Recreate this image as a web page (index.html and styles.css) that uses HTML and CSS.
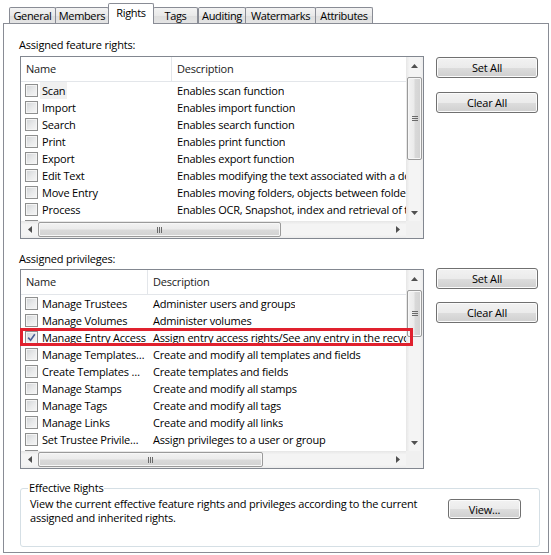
FILE: index.html
```html
<!DOCTYPE html>
<html>
<head>
<meta charset="utf-8">
<link rel="stylesheet" href="styles.css">
</head>
<body>
<div class="window">
  <div class="tabs">
    <div class="tab tab-general">General</div>
    <div class="tab tab-members">Members</div>
    <div class="tab tab-rights active">Rights</div>
    <div class="tab tab-tags">Tags</div>
    <div class="tab tab-auditing">Auditing</div>
    <div class="tab tab-watermarks">Watermarks</div>
    <div class="tab tab-attributes">Attributes</div>
  </div>
  <div class="panel">
    <div class="label label-1">Assigned feature rights:</div>
    <div class="section section-1">
      <div class="listbox list-1">
        <div class="list-content">
          <div class="list-header"><div class="col-name">Name</div><div class="col-desc">Description</div></div>
          <div class="row"><div class="col-name"><span class="check"></span><span class="name focus">Scan</span></div><div class="col-desc">Enables scan function</div></div>
          <div class="row"><div class="col-name"><span class="check"></span><span class="name">Import</span></div><div class="col-desc">Enables import function</div></div>
          <div class="row"><div class="col-name"><span class="check"></span><span class="name">Search</span></div><div class="col-desc">Enables search function</div></div>
          <div class="row"><div class="col-name"><span class="check"></span><span class="name">Print</span></div><div class="col-desc">Enables print function</div></div>
          <div class="row"><div class="col-name"><span class="check"></span><span class="name">Export</span></div><div class="col-desc">Enables export function</div></div>
          <div class="row"><div class="col-name"><span class="check"></span><span class="name">Edit Text</span></div><div class="col-desc">Enables modifying the text associated with a document</div></div>
          <div class="row"><div class="col-name"><span class="check"></span><span class="name">Move Entry</span></div><div class="col-desc">Enables moving folders, objects between folders</div></div>
          <div class="row"><div class="col-name"><span class="check"></span><span class="name">Process</span></div><div class="col-desc">Enables OCR, Snapshot, index and retrieval of text</div></div>
          <div class="row"><div class="col-name"><span class="check"></span><span class="name"></span></div><div class="col-desc"></div></div>
        </div>
        <div class="vscroll">
          <div class="sbtn"><svg width="7" height="4" viewBox="0 0 7 4"><polygon points="0,4 3.5,0 7,4" fill="#505050"/></svg></div>
          <div class="vtrack"><div class="vthumb"><span class="vgrip"></span></div></div>
          <div class="sbtn"><svg width="7" height="4" viewBox="0 0 7 4"><polygon points="0,0 3.5,4 7,0" fill="#505050"/></svg></div>
        </div>
        <div class="hscroll">
          <div class="sbtn"><svg width="4" height="7" viewBox="0 0 4 7"><polygon points="4,0 0,3.5 4,7" fill="#505050"/></svg></div>
          <div class="htrack"><div class="hthumb"><span class="hgrip"></span></div></div>
          <div class="sbtn"><svg width="4" height="7" viewBox="0 0 4 7"><polygon points="0,0 4,3.5 0,7" fill="#505050"/></svg></div>
        </div>
        <div class="corner"></div>
      </div>
      <div class="buttons">
        <button class="btn">Set All</button>
        <button class="btn">Clear All</button>
      </div>
    </div>

    <div class="label label-2">Assigned privileges:</div>
    <div class="section section-2">
      <div class="listbox list-2">
        <div class="list-content">
          <div class="list-header"><div class="col-name">Name</div><div class="col-desc">Description</div></div>
          <div class="row"><div class="col-name"><span class="check"></span><span class="name">Manage Trustees</span></div><div class="col-desc">Administer users and groups</div></div>
          <div class="row"><div class="col-name"><span class="check"></span><span class="name">Manage Volumes</span></div><div class="col-desc">Administer volumes</div></div>
          <div class="row"><div class="col-name"><span class="check checked"><svg width="9" height="9" viewBox="0 0 9 9"><path d="M1.2 4.6 L3.6 7.2 L7.8 1.2" fill="none" stroke="#4a5f97" stroke-width="1.6"/></svg></span><span class="name">Manage Entry Access</span></div><div class="col-desc">Assign entry access rights/See any entry in the recycle bin</div></div>
          <div class="row"><div class="col-name"><span class="check"></span><span class="name">Manage Templates…</span></div><div class="col-desc">Create and modify all templates and fields</div></div>
          <div class="row"><div class="col-name"><span class="check"></span><span class="name">Create Templates …</span></div><div class="col-desc">Create templates and fields</div></div>
          <div class="row"><div class="col-name"><span class="check"></span><span class="name">Manage Stamps</span></div><div class="col-desc">Create and modify all stamps</div></div>
          <div class="row"><div class="col-name"><span class="check"></span><span class="name">Manage Tags</span></div><div class="col-desc">Create and modify all tags</div></div>
          <div class="row"><div class="col-name"><span class="check"></span><span class="name">Manage Links</span></div><div class="col-desc">Create and modify all links</div></div>
          <div class="row"><div class="col-name"><span class="check"></span><span class="name">Set Trustee Privile…</span></div><div class="col-desc">Assign privileges to a user or group</div></div>
          <div class="row"><div class="col-name"><span class="check"></span><span class="name"></span></div><div class="col-desc"></div></div>
        </div>
        <div class="vscroll">
          <div class="sbtn"><svg width="7" height="4" viewBox="0 0 7 4"><polygon points="0,4 3.5,0 7,4" fill="#505050"/></svg></div>
          <div class="vtrack"><div class="vthumb"><span class="vgrip"></span></div></div>
          <div class="sbtn"><svg width="7" height="4" viewBox="0 0 7 4"><polygon points="0,0 3.5,4 7,0" fill="#505050"/></svg></div>
        </div>
        <div class="hscroll">
          <div class="sbtn"><svg width="4" height="7" viewBox="0 0 4 7"><polygon points="4,0 0,3.5 4,7" fill="#505050"/></svg></div>
          <div class="htrack"><div class="hthumb"><span class="hgrip"></span></div></div>
          <div class="sbtn"><svg width="4" height="7" viewBox="0 0 4 7"><polygon points="0,0 4,3.5 0,7" fill="#505050"/></svg></div>
        </div>
        <div class="corner"></div>
      </div>
      <div class="buttons">
        <button class="btn">Set All</button>
        <button class="btn">Clear All</button>
      </div>
      <div class="highlight"></div>
    </div>

    <fieldset class="group">
      <legend>Effective Rights</legend>
      <div class="group-body">
        <p class="group-text">View the current effective feature rights and privileges according to the current<br>assigned and inherited rights.</p>
        <button class="btn btn-view">View...</button>
      </div>
    </fieldset>
  </div>
</div>
</body>
</html>
```

FILE: styles.css
```css
* { box-sizing: border-box; }

html, body {
  margin: 0;
  padding: 0;
  background: #ffffff;
}

body {
  font-family: "Open Sans", "Noto Sans", sans-serif;
  font-size: 11px;
  letter-spacing: -0.2px;
  color: #000;
}

.window {
  width: 551px;
  height: 555px;
  padding-left: 3px;
}

/* Tabs */
.tabs {
  display: flex;
  align-items: flex-end;
  height: 23px;
  padding-left: 6px;
}

.tab {
  height: 16px;
  line-height: 15px;
  padding: 0;
  text-align: center;
  letter-spacing: -0.35px;
  border: 1px solid #898c95;
  border-bottom: none;
  border-radius: 2px 2px 0 0;
  margin-left: -1px;
  background: linear-gradient(#f3f3f3, #e9e9e9 50%, #dedede 51%, #e4e4e4);
  white-space: nowrap;
  overflow: hidden;
  flex: none;
}

.tab-general { margin-left: 0; width: 47px; }
.tab-members { width: 54px; }
.tab-rights { width: 46px; }
.tab-tags { width: 45px; }
.tab-auditing { margin-left: 0; width: 48px; }
.tab-watermarks { width: 71px; }
.tab-attributes { width: 58px; }

.tab.active {
  position: relative;
  z-index: 2;
  height: 21px;
  line-height: 18px;
  margin-bottom: -1px;
  background: #fff;
}

/* Panel */
.panel {
  width: 546px;
  height: 530px;
  border: 1px solid #898c95;
  background: #fff;
  padding-left: 16px;
}

.label {
  line-height: 14px;
  margin-left: -1px;
}

.label-1 { margin-top: 14px; }
.label-2 { margin-top: 13px; }

.section {
  display: flex;
  gap: 12px;
  position: relative;
}

.section-1 { margin-top: 4px; }
.section-2 { margin-top: 3px; }

/* List box */
.listbox {
  width: 404px;
  border: 1px solid #828790;
  display: grid;
  grid-template-columns: 385px 17px;
  background: #fff;
}

.list-1 {
  height: 183px;
  grid-template-rows: 164px 17px;
}

.list-2 {
  height: 200px;
  grid-template-rows: 181px 17px;
}

.list-content {
  overflow: hidden;
  white-space: nowrap;
}

.list-header {
  display: flex;
  height: 25px;
  line-height: 24px;
  border-bottom: 1px solid #e3e6ea;
  color: #1a1a1a;
}

.list-header .col-name {
  padding-left: 5px;
  border-right: 1px solid #e3e6ea;
}

.list-1 .col-name { width: 150px; flex: none; }
.list-2 .col-name { width: 126px; flex: none; }

.list-1 .list-header .col-name { width: 151px; }
.list-2 .list-header .col-name { width: 127px; }

.col-desc {
  padding-left: 5px;
  overflow: hidden;
}

.row {
  display: flex;
  height: 17px;
  line-height: 17px;
}

.row .col-name {
  display: flex;
  align-items: center;
  padding-left: 4px;
  overflow: hidden;
}

.row .col-desc { padding-left: 6px; }

.name {
  margin-left: 2px;
  padding: 0 2px;
  line-height: 17px;
}

.name.focus {
  background: #f0f0f0;
}

.check {
  width: 13px;
  height: 13px;
  flex: none;
  border: 1px solid #8e8f8f;
  background: linear-gradient(135deg, #d0d3d6 0%, #e9eaeb 55%, #f6f6f6 100%);
  box-shadow: inset 0 0 0 1px #f4f4f4;
  display: flex;
  align-items: center;
  justify-content: center;
}

.check svg { display: block; }

/* Scrollbars */
.vscroll {
  display: flex;
  flex-direction: column;
  background: linear-gradient(to right, #e6e6e6, #f4f4f4 20%, #f4f4f4 80%, #ececec);
}

.hscroll {
  display: flex;
  background: linear-gradient(#e6e6e6, #f4f4f4 20%, #f4f4f4 80%, #ececec);
}

.sbtn {
  width: 17px;
  height: 17px;
  flex: none;
  display: flex;
  align-items: center;
  justify-content: center;
}

.sbtn svg { display: block; }

.vtrack {
  flex: 1;
  padding: 3px 1px 0 1px;
}

.vthumb {
  height: 83px;
  border: 1px solid #9a9a9a;
  border-radius: 2px;
  background: linear-gradient(to right, #f2f2f2, #ebebeb 45%, #d9d9d9 55%, #d2d2d2);
  box-shadow: inset 0 0 0 1px #f7f7f7;
  display: flex;
  align-items: center;
  justify-content: center;
}

.list-2 .vthumb { height: 47px; }

.vgrip {
  width: 6px;
  height: 5px;
  background: repeating-linear-gradient(#6a6a6a 0 1px, transparent 1px 2px);
}

.htrack {
  flex: 1;
  padding: 1px 0;
}

.hthumb {
  width: 243px;
  height: 15px;
  border: 1px solid #9a9a9a;
  border-radius: 2px;
  background: linear-gradient(#f2f2f2, #ebebeb 45%, #d9d9d9 55%, #d2d2d2);
  box-shadow: inset 0 0 0 1px #f7f7f7;
  display: flex;
  align-items: center;
  justify-content: center;
}

.list-2 .hthumb { width: 225px; }

.hgrip {
  width: 5px;
  height: 6px;
  background: repeating-linear-gradient(to right, #6a6a6a 0 1px, transparent 1px 2px);
}

.corner { background: #f0f0f0; }

/* Buttons */
.buttons {
  display: flex;
  flex-direction: column;
  width: 102px;
}

.section-1 .buttons { margin-top: 1px; gap: 14px; }
.section-2 .buttons { margin-top: -1px; gap: 13px; }

.btn {
  font-family: inherit;
  font-size: 11px;
  letter-spacing: -0.2px;
  color: #000;
  width: 102px;
  height: 21px;
  padding: 0;
  border: 1px solid #707070;
  border-radius: 3px;
  background: linear-gradient(#f2f2f2 0%, #ebebeb 50%, #dddddd 51%, #cfcfcf 100%);
  box-shadow: inset 0 0 0 1px #fbfbfb;
}

/* Annotation overlay */
.highlight {
  position: absolute;
  left: 0;
  top: 59px;
  width: 393px;
  height: 18px;
  border: 3px solid #e0212e;
  pointer-events: none;
}

/* Group box */
.group {
  margin: 12px 0 0 0;
  width: 520px;
  border: 1px solid #d5dfe5;
  border-radius: 3px;
  padding: 0 18px 21px 9px;
}

.group legend {
  padding: 0 1px;
  margin-left: -2px;
  line-height: 14px;
}

.group-body {
  display: flex;
  justify-content: space-between;
  align-items: flex-start;
  padding-top: 2px;
}

.group-text {
  margin: 0;
  line-height: 14px;
}

.btn-view {
  width: 73px;
  height: 20px;
  margin-top: 2px;
}
```
